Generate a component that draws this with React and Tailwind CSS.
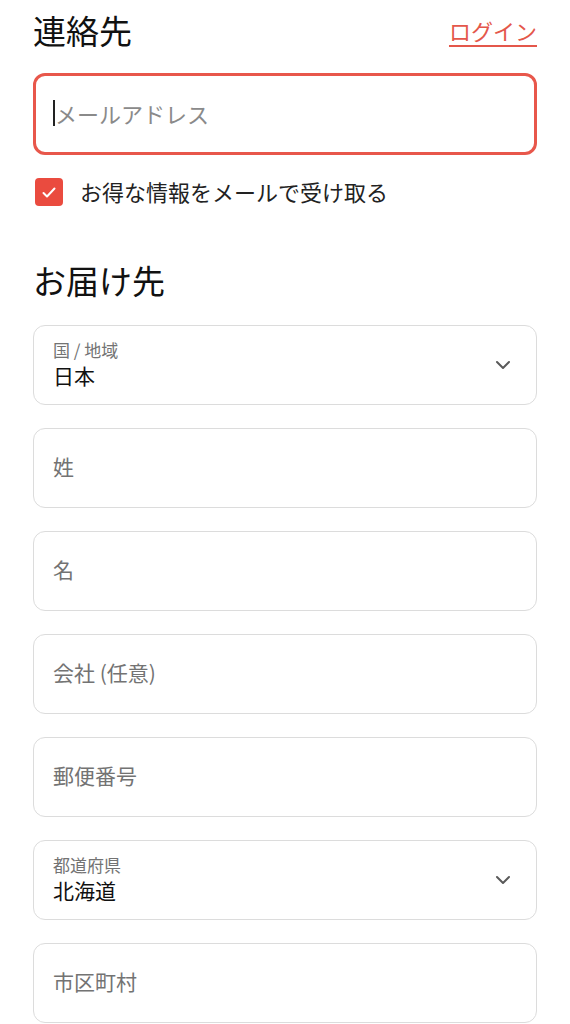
import React from "react";

const font = { fontFamily: '"Noto Sans CJK JP", "Noto Sans", sans-serif' };

function Chevron() {
  return (
    <svg width="16" height="10" viewBox="0 0 16 10" fill="none" className="shrink-0">
      <path d="M2 2 L8 8 L14 2" stroke="#5a5a5a" strokeWidth="2" strokeLinecap="round" strokeLinejoin="round" />
    </svg>
  );
}

function TextField({ placeholder }) {
  return (
    <div className="h-[80px] rounded-[12px] border-[1.5px] border-[#dcdcdc] flex items-center px-[19px]">
      <span className="text-[21px] leading-none text-[#737373] -mt-[3px]">{placeholder}</span>
    </div>
  );
}

function SelectField({ label, value }) {
  return (
    <div className="h-[80px] rounded-[12px] border-[1.5px] border-[#dcdcdc] flex items-center justify-between pl-[19px] pr-[25px]">
      <div className="flex flex-col -mt-[2px]">
        <span className="text-[17px] leading-[22px] text-[#737373]">{label}</span>
        <span className="text-[21px] leading-[28px] text-[#111]">{value}</span>
      </div>
      <Chevron />
    </div>
  );
}

export default function App() {
  return (
    <div className="w-[570px] min-h-[1024px] bg-white px-[33px]" style={font}>
      <div className="h-[60px] flex items-center justify-between">
        <h2 className="text-[33px] leading-none text-[#111] font-normal">連絡先</h2>
        <a className="text-[22px] leading-none text-[#e4574b] underline underline-offset-[5px] decoration-[2px]">ログイン</a>
      </div>
      <div className="mt-[13px] h-[82px] rounded-[12px] border-[3px] border-[#e8574b] flex items-center px-[17px]">
        <span className="w-[2px] h-[26px] bg-[#222] -mt-[2px]"></span>
        <span className="text-[22px] leading-none text-[#8a8a8a] -mt-[3px]">メールアドレス</span>
      </div>
      <div className="mt-[23px] flex items-center gap-[17px]">
        <div className="w-[28px] h-[28px] ml-[2px] rounded-[4px] bg-[#ea4b3f] flex items-center justify-center">
          <svg width="16" height="13" viewBox="0 0 16 13" fill="none">
            <path d="M2.5 7 L6 10.5 L13.5 2.5" stroke="white" strokeWidth="2" strokeLinecap="round" strokeLinejoin="round" />
          </svg>
        </div>
        <span className="text-[22px] leading-none text-[#222] -mt-[2px]">お得な情報をメールで受け取る</span>
      </div>
      <h2 className="mt-[54px] text-[33px] leading-[40px] text-[#111] font-normal">お届け先</h2>
      <div className="mt-[25px] flex flex-col gap-[23px]">
        <SelectField label="国 / 地域" value="日本" />
        <TextField placeholder="姓" />
        <TextField placeholder="名" />
        <TextField placeholder="会社 (任意)" />
        <TextField placeholder="郵便番号" />
        <SelectField label="都道府県" value="北海道" />
        <TextField placeholder="市区町村" />
      </div>
    </div>
  );
}
